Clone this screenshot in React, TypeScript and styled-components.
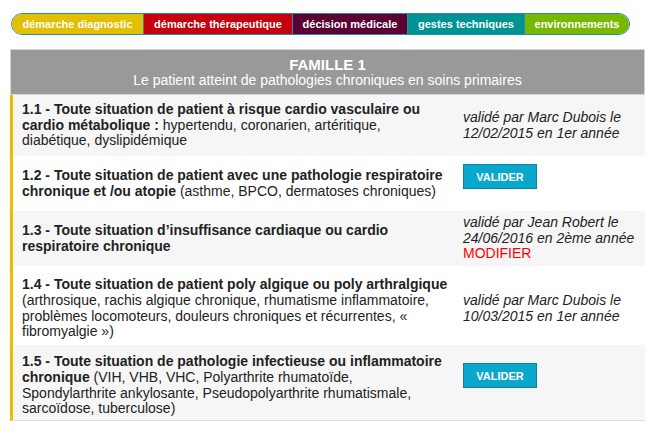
import React from "react";
import styled, { createGlobalStyle } from "styled-components";

const Global = createGlobalStyle`
  html, body { margin: 0; padding: 0; background: #fff; }
  body { font-family: "Liberation Sans", Arial, Helvetica, sans-serif; color: #222; }
`;

const Page = styled.div`
  width: 658px;
  height: 438px;
  box-sizing: border-box;
  padding: 13px 13px 0 10px;
  overflow: hidden;
`;

const TabBar = styled.nav`
  display: inline-flex;
  margin-left: 1px;
  height: 22px;
  box-sizing: border-box;
  border: 1px solid #2a8ca8;
  border-radius: 11px;
  overflow: hidden;
`;

const Tab = styled.a<{ $bg: string; $w: number }>`
  display: flex;
  align-items: center;
  justify-content: center;
  width: ${(p) => p.$w}px;
  box-sizing: border-box;
  background: ${(p) => p.$bg};
  color: #fff;
  font-size: 11px;
  font-weight: bold;
  white-space: nowrap;
  text-decoration: none;
  & + & { border-left: 1px solid #2a8ca8; }
`;

const Family = styled.section`
  margin-top: 14px;
  width: 635px;
`;

const Header = styled.header`
  background: #999;
  border: 1px solid #d4d4d4;
  color: #fff;
  text-align: center;
  padding: 7px 0 6px;
  line-height: 15.5px;
`;

const HeaderTitle = styled.div`
  font-size: 15px;
  font-weight: bold;
`;

const HeaderSub = styled.div`
  font-size: 14px;
`;

const List = styled.div`
  border-left: 3px solid #e6bf00;
  border-bottom: 1px solid #dcdcdc;
`;

const Row = styled.div<{ $h: number; $alt: boolean; $shift?: number }>`
  display: grid;
  grid-template-columns: 432px 1fr;
  column-gap: 9px;
  align-items: center;
  box-sizing: border-box;
  min-height: ${(p) => p.$h}px;
  padding: ${(p) => p.$shift ?? 0}px 4px 0 9px;
  background: ${(p) => (p.$alt ? "#f6f6f6" : "#fff")};
  font-size: 14px;
  line-height: 15.6px;
`;

const Desc = styled.div`
  color: #222;
`;

const Title = styled.strong`
  font-weight: bold;
`;

const Status = styled.div`
  font-style: italic;
  color: #222;
`;

const Modify = styled.a`
  display: block;
  font-style: normal;
  color: #ff0000;
  text-decoration: none;
`;

const ValidateButton = styled.button<{ $top: number }>`
  align-self: start;
  justify-self: start;
  margin-top: ${(p) => p.$top}px;
  width: 74px;
  height: 25px;
  box-sizing: border-box;
  background: #0aa7cc;
  border: 1px solid #0a85a6;
  color: #fff;
  font-family: "Liberation Sans", Arial, sans-serif;
  font-size: 11px;
  font-weight: bold;
  padding: 0;
  cursor: pointer;
`;

const tabs = [
  { label: "démarche diagnostic", bg: "#e4be00", w: 131 },
  { label: "démarche thérapeutique", bg: "#c6000c", w: 149 },
  { label: "décision médicale", bg: "#5a0032", w: 115 },
  { label: "gestes techniques", bg: "#009393", w: 117 },
  { label: "environnements", bg: "#78b800", w: 105 },
];

export default function App() {
  return (
    <>
      <Global />
      <Page>
        <TabBar>
          {tabs.map((t) => (
            <Tab key={t.label} $bg={t.bg} $w={t.w}>
              {t.label}
            </Tab>
          ))}
        </TabBar>
        <Family>
          <Header>
            <HeaderTitle>FAMILLE 1</HeaderTitle>
            <HeaderSub>Le patient atteint de pathologies chroniques en soins primaires</HeaderSub>
          </Header>
          <List>
            <Row $h={61} $alt={true}>
              <Desc>
                <Title>
                  1.1 - Toute situation de patient à risque cardio vasculaire ou
                  <br />
                  cardio métabolique :
                </Title>{" "}
                hypertendu, coronarien, artéritique,
                <br />
                diabétique, dyslipidémique
              </Desc>
              <Status>
                validé par Marc Dubois le
                <br />
                12/02/2015 en 1er année
              </Status>
            </Row>
            <Row $h={55} $alt={false}>
              <Desc>
                <Title>
                  1.2 - Toute situation de patient avec une pathologie respiratoire
                  <br />
                  chronique et /ou atopie
                </Title>{" "}
                (asthme, BPCO, dermatoses chroniques)
              </Desc>
              <ValidateButton $top={8}>VALIDER</ValidateButton>
            </Row>
            <Row $h={55} $alt={true}>
              <Desc>
                <Title>
                  1.3 - Toute situation d’insuffisance cardiaque ou cardio
                  <br />
                  respiratoire chronique
                </Title>
              </Desc>
              <Status>
                validé par Jean Robert le
                <br />
                24/06/2016 en 2ème année
                <Modify>MODIFIER</Modify>
              </Status>
            </Row>
            <Row $h={79} $alt={false} $shift={6}>
              <Desc>
                <Title>1.4 - Toute situation de patient poly algique ou poly arthralgique</Title>
                <br />
                (arthrosique, rachis algique chronique, rhumatisme inflammatoire,
                <br />
                problèmes locomoteurs, douleurs chroniques et récurrentes, «
                <br />
                fibromyalgie »)
              </Desc>
              <Status>
                validé par Marc Dubois le
                <br />
                10/03/2015 en 1er année
              </Status>
            </Row>
            <Row $h={75} $alt={true} $shift={6}>
              <Desc>
                <Title>
                  1.5 - Toute situation de pathologie infectieuse ou inflammatoire
                  <br />
                  chronique
                </Title>{" "}
                (VIH, VHB, VHC, Polyarthrite rhumatoïde,
                <br />
                Spondylarthrite ankylosante, Pseudopolyarthrite rhumatismale,
                <br />
                sarcoïdose, tuberculose)
              </Desc>
              <ValidateButton $top={12}>VALIDER</ValidateButton>
            </Row>
          </List>
        </Family>
      </Page>
    </>
  );
}
